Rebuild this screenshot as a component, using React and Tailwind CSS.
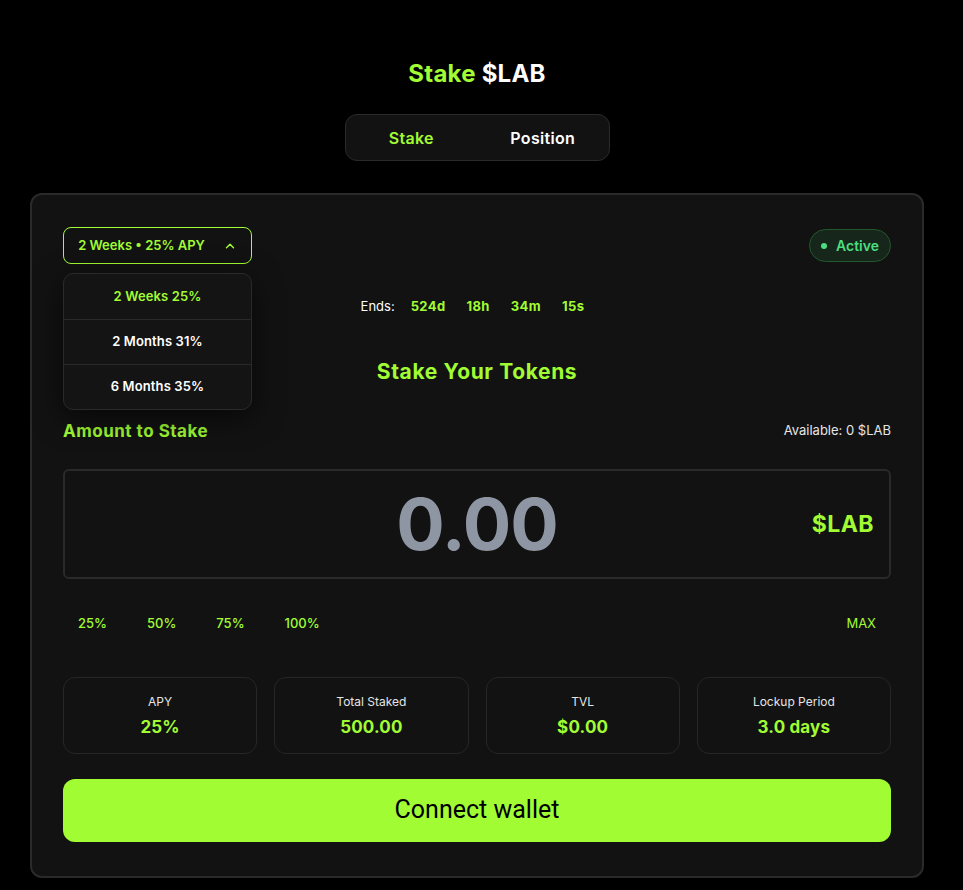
import React, { useState } from "react";
import { ChevronUp } from "lucide-react";

const lime = "text-[#a1fc33]";

const StatCard = ({ label, value }) => (
   <div className="flex h-[77px] flex-col items-center justify-center rounded-xl border border-[#262626] bg-[#121212]">
      <p className="text-[12px] leading-4 text-[#e5e5e5]">{label}</p>
      <p className={`mt-[7px] text-[17px] font-bold leading-5 tracking-[0.01em] ${lime}`}>{value}</p>
   </div>
);

const App = () => {
   const [tab, setTab] = useState("stake");
   const [open, setOpen] = useState(true);
   const [plan, setPlan] = useState(0);

   const plans = [
      { label: "2 Weeks 25%", short: "2 Weeks • 25% APY" },
      { label: "2 Months 31%", short: "2 Months • 31% APY" },
      { label: "6 Months 35%", short: "6 Months • 35% APY" },
   ];

   return (
      <div
         className="min-h-[890px] w-full bg-black pt-[60px] pb-[12px]"
         style={{ fontFamily: "Inter, 'Noto Sans', sans-serif" }}
      >
         <div className="w-[954px]">
            <h1 className="text-center text-[24px] font-bold leading-7 tracking-[0.01em] text-white">
               <span className={lime}>Stake</span> $LAB
            </h1>

            {/* Tabs */}
            <div className="mx-auto mt-[26px] flex h-[47px] w-[265px] items-center rounded-xl border border-[#2a2a2a] bg-[#121212] px-2">
               <button
                  onClick={() => setTab("stake")}
                  className={`flex-1 pr-3 text-[16px] font-semibold tracking-[0.02em] ${tab === "stake" ? lime : "text-white"}`}
               >
                  Stake
               </button>
               <button
                  onClick={() => setTab("position")}
                  className={`flex-1 pl-1 text-[16px] font-semibold tracking-[0.02em] ${tab === "position" ? lime : "text-white"}`}
               >
                  Position
               </button>
            </div>

            {/* Main card */}
            <div className="mx-auto mt-[32px] w-[894px] rounded-xl border-2 border-[#2a2a2a] bg-[#121212] px-[31px] pt-[32px] pb-[34px]">
               <div className="flex items-start justify-between">
                  <div className="relative">
                     <button
                        onClick={() => setOpen(!open)}
                        className={`flex h-[37px] w-[189px] items-center justify-center gap-[18px] rounded-lg border border-[#a1fc33] text-[13px] font-semibold ${lime}`}
                     >
                        {plans[plan].short}
                        <ChevronUp size={14} strokeWidth={2.5} />
                     </button>
                     {open && (
                        <div className="absolute left-0 top-[46px] z-10 w-[189px] overflow-hidden rounded-[10px] border border-[#2a2a2a] bg-[#141414] shadow-[0_8px_30px_rgba(0,0,0,0.6)]">
                           {plans.map((p, i) => (
                              <button
                                 key={p.label}
                                 onClick={() => {
                                    setPlan(i);
                                    setOpen(false);
                                 }}
                                 className={`flex h-[45px] w-full items-center justify-center text-[13px] font-semibold tracking-[0.01em] ${
                                    i > 0 ? "border-t border-[#2a2a2a]" : ""
                                 } ${i === plan ? lime : "text-white"}`}
                              >
                                 {p.label}
                              </button>
                           ))}
                        </div>
                     )}
                  </div>
                  <div className="mt-[2px] flex h-[33px] items-center gap-[9px] rounded-full border border-[#23582c] bg-[#16261a] px-[11px] text-[14px] font-semibold text-[#4ade80]">
                     <span className="h-[6px] w-[6px] rounded-full bg-[#4ade80]" />
                     Active
                  </div>
               </div>

               {/* Countdown */}
               <div className="mt-[32px] flex items-center justify-center pr-[9px] text-[13px] leading-5">
                  <span className="mr-[16px] text-white">Ends:</span>
                  <span className={`mr-[21px] font-bold tracking-[0.03em] ${lime}`}>524d</span>
                  <span className={`mr-[21px] font-bold tracking-[0.03em] ${lime}`}>18h</span>
                  <span className={`mr-[21px] font-bold tracking-[0.03em] ${lime}`}>34m</span>
                  <span className={`font-bold tracking-[0.03em] ${lime}`}>15s</span>
               </div>

               <h2 className={`mt-[42px] text-center text-[21px] font-bold leading-7 tracking-[0.03em] ${lime}`}>
                  Stake Your Tokens
               </h2>

               <div className="mt-[33px] flex items-center justify-between">
                  <p className={`text-[17px] font-bold leading-6 tracking-[0.03em] ${lime}`}>Amount to Stake</p>
                  <p className="text-[13px] text-[#e5e5e5]">Available: 0 $LAB</p>
               </div>

               {/* Amount input */}
               <div className="relative mt-[26px] flex h-[110px] items-center justify-center rounded-md border-2 border-[#2a2a2a] bg-[#121212]">
                  <span className="text-[72px] font-bold leading-none tracking-[-1px] text-[#8f96a3]">0.00</span>
                  <span className={`absolute right-[15px] text-[23px] font-bold tracking-[0.02em] ${lime}`}>$LAB</span>
               </div>

               {/* Percent buttons */}
               <div className="mt-[34px] flex items-center justify-between">
                  <div className="flex gap-[10px]">
                     {["25%", "50%", "75%", "100%"].map((p) => (
                        <button key={p} className={`px-[15px] py-[1px] text-[13px] font-medium ${lime}`}>
                           {p}
                        </button>
                     ))}
                  </div>
                  <button className={`px-[15px] text-[13px] font-normal ${lime}`}>MAX</button>
               </div>

               {/* Stats */}
               <div className="mt-[42px] grid grid-cols-4 gap-[17px]">
                  <StatCard label="APY" value="25%" />
                  <StatCard label="Total Staked" value="500.00" />
                  <StatCard label="TVL" value="$0.00" />
                  <StatCard label="Lockup Period" value="3.0 days" />
               </div>

               <button
                  className="mt-[25px] flex h-[63px] w-full items-center justify-center rounded-xl bg-[#a1fc33] text-[25px] font-normal text-black"
                  style={{ fontFamily: "Roboto, 'Noto Sans', sans-serif" }}
               >
                  Connect wallet
               </button>
            </div>
         </div>
      </div>
   );
};

export default App;
